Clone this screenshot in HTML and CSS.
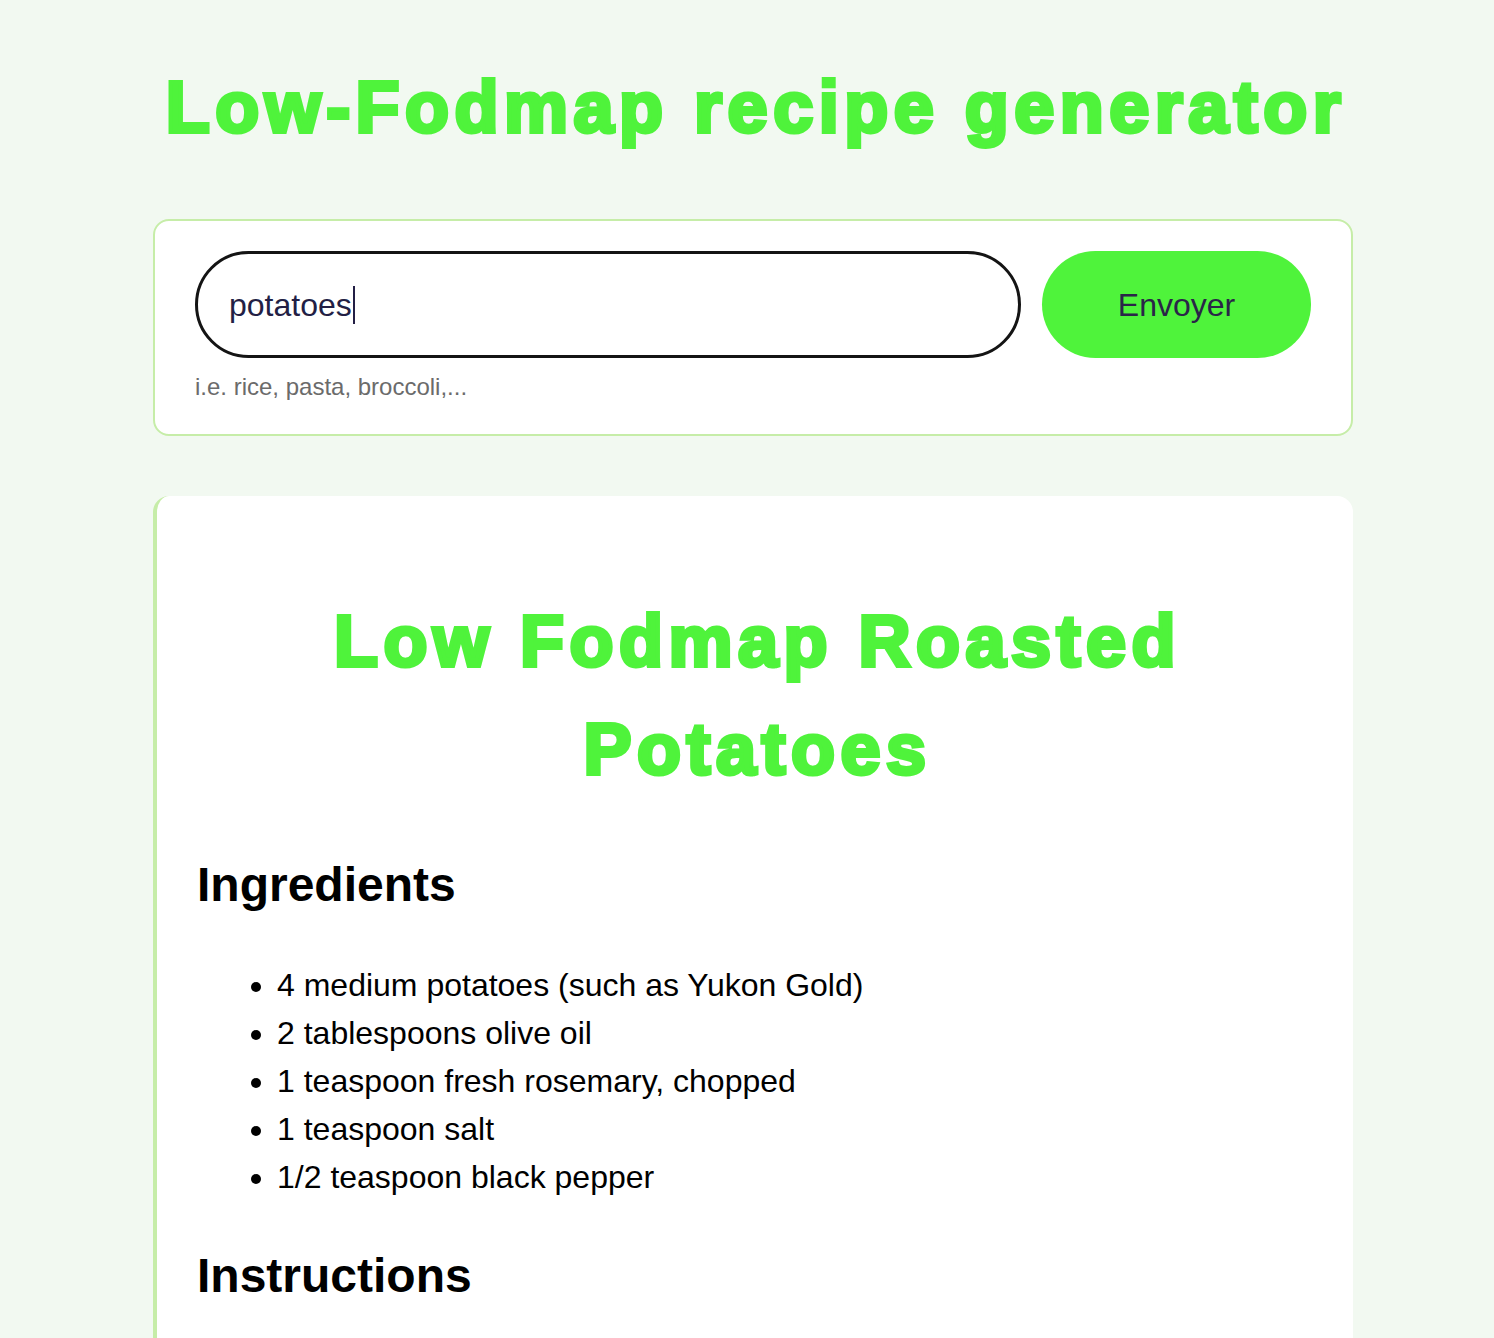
FILE: index.html
```html
<!DOCTYPE html>
<html lang="en">
<head>
<meta charset="utf-8">
<title>Low-Fodmap recipe generator</title>
<link rel="stylesheet" href="styles.css">
</head>
<body>
<main class="page">
  <h1 class="site-title">Low-Fodmap recipe generator</h1>
  <form class="search-card">
    <div class="search-row">
      <div class="search-input">potatoes<span class="caret"></span></div>
      <button type="button" class="send-btn">Envoyer</button>
    </div>
    <p class="hint">i.e. rice, pasta, broccoli,...</p>
  </form>
  <section class="recipe-card">
    <h1 class="recipe-title">Low Fodmap Roasted Potatoes</h1>
    <h2 class="section-title first">Ingredients</h2>
    <ul class="ingredients">
      <li>4 medium potatoes (such as Yukon Gold)</li>
      <li>2 tablespoons olive oil</li>
      <li>1 teaspoon fresh rosemary, chopped</li>
      <li>1 teaspoon salt</li>
      <li>1/2 teaspoon black pepper</li>
    </ul>
    <h2 class="section-title">Instructions</h2>
  </section>
</main>
</body>
</html>
```
FILE: styles.css
```css
html, body {
  margin: 0;
  padding: 0;
}
body {
  background: #f2f9f1;
  font-family: "Liberation Sans", Arial, sans-serif;
  color: #000;
  padding-left: 12px;
  height: 1338px;
  overflow: hidden;
}
.page {
  width: 1200px;
  margin: 0 auto;
}
.site-title,
.recipe-title {
  font-family: "Liberation Sans", Arial, sans-serif;
  font-weight: 700;
  font-size: 72px;
  color: #4ff33b;
  -webkit-text-stroke: 4px #4ff33b;
  letter-spacing: 5.5px;
  text-align: center;
  margin: 0;
}
.site-title {
  line-height: 101.5px;
  padding: 57px 0 0 6px;
  margin-bottom: 60px;
}
.search-card {
  background: #fff;
  border: 2px solid #c6eda8;
  border-radius: 16px;
  padding: 30px 40px 33px;
  margin: 0;
}
.search-row {
  display: flex;
  gap: 21px;
}
.search-input {
  flex: 1;
  box-sizing: border-box;
  height: 107px;
  border: 3px solid #141414;
  border-radius: 9999px;
  padding: 2px 31px 0;
  display: flex;
  align-items: center;
  font-size: 32px;
  color: #231f45;
}
.caret {
  display: inline-block;
  width: 2px;
  height: 38px;
  background: #231f45;
  margin-left: 1px;
}
.send-btn {
  width: 269px;
  height: 107px;
  border: none;
  border-radius: 9999px;
  background: #4ff33b;
  color: #2a2548;
  font-family: "Liberation Sans", Arial, sans-serif;
  font-size: 32px;
  padding: 2px 0 0;
}
.hint {
  margin: 15px 0 0;
  font-size: 24px;
  line-height: 1.2;
  color: #6b6b6b;
}
.recipe-card {
  margin-top: 60px;
  background: #fff;
  border-left: 4px solid #c6eda8;
  border-radius: 16px 16px 0 0;
  padding: 91px 40px 60px 40px;
  min-height: 900px;
}
.recipe-title {
  line-height: 108px;
  padding-left: 5px;
}
.section-title {
  font-size: 48px;
  font-weight: 700;
  line-height: 1.2;
  margin: 0;
}
.section-title.first {
  margin-top: 53px;
}
.ingredients {
  margin: 47px 0 46px;
  padding-left: 80px;
  font-size: 32px;
  line-height: 48px;
}
```
